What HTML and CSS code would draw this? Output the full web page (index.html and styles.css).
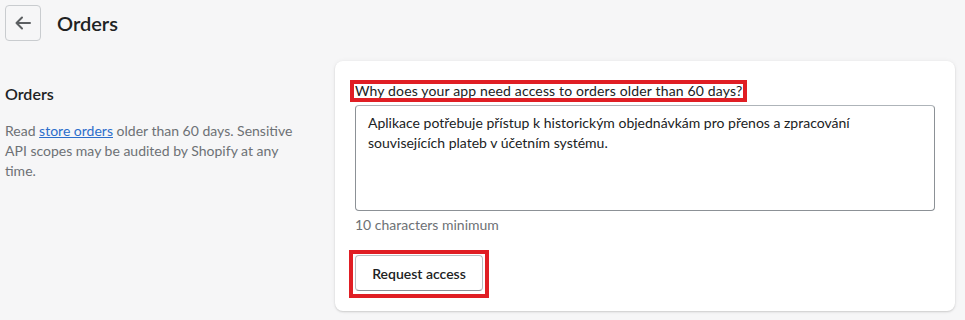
FILE: index.html
```html
<!DOCTYPE html>
<html lang="en">
<head>
<meta charset="utf-8">
<title>Orders</title>
<link rel="stylesheet" href="styles.css">
</head>
<body>
<header class="page-header">
  <button class="back-btn" aria-label="Back">
    <svg width="20" height="20" viewBox="0 0 20 20" aria-hidden="true"><path d="M17 10H3.5M9 4.5L3.5 10L9 15.5" fill="none" stroke="#5c5f62" stroke-width="2" stroke-linecap="round" stroke-linejoin="round"/></svg>
  </button>
  <h1 class="page-title">Orders</h1>
</header>
<main class="layout">
  <section class="aside">
    <h2 class="aside-title">Orders</h2>
    <p class="aside-text">Read <a href="#" class="link">store orders</a> older than 60 days. Sensitive API scopes may be audited by Shopify at any time.</p>
  </section>
  <section class="card">
    <label class="field-label" for="reason"><span class="mark">Why does your app need access to orders older than 60 days?</span></label>
    <div class="textarea" id="reason">Aplikace potřebuje přístup k historickým objednávkám pro přenos a zpracování<br>souvisejících plateb v účetním systému.</div>
    <div class="help">10 characters minimum</div>
    <div class="btn-mark"><button class="btn">Request access</button></div>
  </section>
</main>
</body>
</html>
```

FILE: styles.css
```css
* { box-sizing: border-box; }
html, body { margin: 0; padding: 0; }
body {
  background: #f6f6f7;
  font-family: Lato, "Segoe UI", sans-serif;
  font-size: 14px;
  line-height: 20px;
  color: #202223;
  width: 965px;
  height: 320px;
  overflow: hidden;
}
.page-header {
  display: flex;
  align-items: center;
  padding: 5px 5px 0;
  height: 40px;
}
.back-btn {
  width: 36px;
  height: 36px;
  border: 1px solid #c9cccf;
  border-radius: 4px;
  background: transparent;
  display: flex;
  align-items: center;
  justify-content: center;
  padding: 0;
}
.page-title {
  margin: 0 0 0 16px;
  font-size: 20px;
  font-weight: 600;
  line-height: 28px;
}
.layout {
  display: grid;
  grid-template-columns: 296px 620px;
  column-gap: 34px;
  padding: 21px 0 0 5px;
}
.aside { padding-top: 21px; }
.aside-title {
  margin: 0;
  font-size: 16px;
  font-weight: 600;
  line-height: 24px;
}
.aside-text {
  margin: 15px 0 0;
  color: #6d7175;
}
.link { color: #2c6ecb; text-decoration: underline; }
.card {
  background: #fff;
  border-radius: 8px;
  box-shadow: 0 0 5px rgba(23, 24, 24, 0.05), 0 1px 2px rgba(0, 0, 0, 0.15);
  padding: 19px 20px 19px;
  height: 250px;
}
.field-label { display: block; }
.mark {
  display: inline-block;
  border: 4px solid #e01e24;
  line-height: 14px;
  padding: 0 1px;
  margin-left: -5px;
  letter-spacing: 0.15px;
}
.textarea {
  margin-top: 3px;
  height: 106px;
  border: 1px solid #8c9196;
  border-top-color: #aeb4b9;
  border-radius: 4px;
  padding: 7px 12px;
  color: #202223;
}
.help {
  margin-top: 4px;
  color: #6d7175;
}
.btn-mark {
  display: inline-flex;
  margin: 15px 0 0 -6px;
  border: 4px solid #e01e24;
  padding: 1px 2px 3px;
}
.btn {
  height: 36px;
  width: 128px;
  background: #fff;
  border: 1px solid #babfc3;
  border-bottom-color: #8c9196;
  border-radius: 4px;
  font-family: inherit;
  font-size: 14px;
  font-weight: 600;
  color: #202223;
  padding: 0 16px;
}
```
